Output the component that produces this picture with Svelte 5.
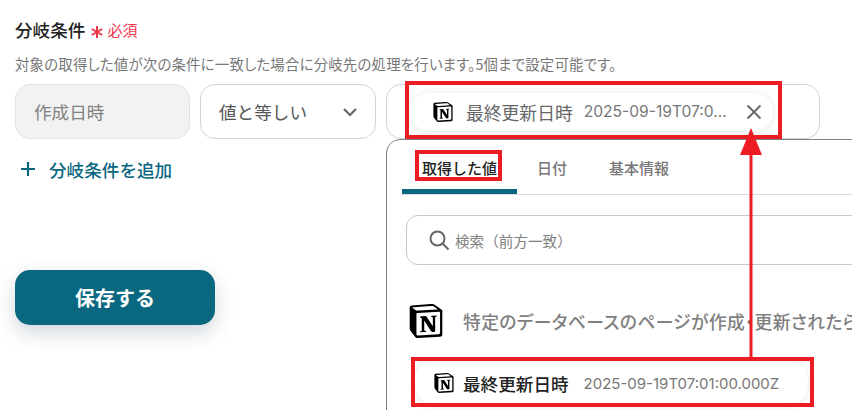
<script>
  const notion = 'M4.459 4.208c.746.606 1.026.56 2.428.466l13.215-.793c.28 0 .047-.28-.046-.326L17.86 1.968c-.42-.326-.981-.7-2.055-.607L3.01 2.295c-.466.046-.56.28-.374.466zm.793 3.08v13.904c0 .747.373 1.027 1.214.98l14.523-.84c.841-.046.935-.56.935-1.167V6.354c0-.606-.233-.933-.748-.887l-15.177.887c-.56.047-.747.327-.747.934zm14.337.745c.093.42 0 .84-.42.888l-.7.14v10.264c-.608.327-1.168.514-1.635.514-.748 0-.935-.234-1.495-.933l-4.577-7.186v6.952L12.21 19s0 .84-1.168.84l-3.222.186c-.093-.186 0-.653.327-.746l.84-.233V9.854L7.822 9.76c-.094-.42.14-1.026.793-1.073l3.456-.233 4.764 7.279v-6.44l-1.215-.139c-.093-.514.28-.887.747-.933zM1.936 1.035l13.31-.98c1.634-.14 2.055-.047 3.082.7l4.249 2.986c.7.513.934.653.934 1.213v16.378c0 1.026-.373 1.634-1.68 1.726l-15.458.934c-.98.047-1.448-.093-1.962-.747l-3.129-4.06c-.56-.747-.793-1.306-.793-1.96V2.667c0-.839.374-1.54 1.447-1.632z';
  const tabs = ['取得した値', '日付', '基本情報'];
</script>

<main class="page">
  <div class="label-row">
    <span class="label">分岐条件</span>
    <svg class="star" width="14" height="14" viewBox="0 0 14 14"><path d="M7 1v12M1.8 4l10.4 6M12.2 4L1.8 10" stroke="#f0364f" stroke-width="2" /></svg>
    <span class="required">必須</span>
  </div>
  <p class="desc">対象の取得した値が次の条件に一致した場合に分岐先の処理を行います。5個まで設定可能です。</p>

  <div class="fields">
    <div class="field readonly">作成日時</div>
    <div class="field select">
      <span>値と等しい</span>
      <svg width="16" height="10" viewBox="0 0 16 10"><path d="M2 2l6 6 6-6" fill="none" stroke="#666" stroke-width="2.2" /></svg>
    </div>
    <div class="field value">
      <div class="chip">
        <svg class="chip-logo" width="20" height="20" viewBox="0 0 24 24"><path d={notion} /></svg>
        <span class="chip-name">最終更新日時</span>
        <span class="chip-date">2025-09-19T07:0...</span>
        <svg class="close" width="16" height="16" viewBox="0 0 16 16"><path d="M1.5 1.5l13 13M14.5 1.5l-13 13" stroke="#666" stroke-width="1.8" /></svg>
      </div>
    </div>
  </div>

  <div class="add">
    <svg width="18" height="18" viewBox="0 0 18 18"><path d="M9 2v14M2 9h14" stroke="#0a6780" stroke-width="2.2" /></svg>
    <span>分岐条件を追加</span>
  </div>

  <button class="save">保存する</button>

  <div class="panel">
    <div class="tabs">
      {#each tabs as tab, i}
        <div class="tab" class:active={i === 0}>{tab}</div>
      {/each}
    </div>
    <div class="search">
      <svg width="22" height="22" viewBox="0 0 22 22"><circle cx="9.5" cy="9.5" r="7" fill="none" stroke="#666" stroke-width="2" /><path d="M14.5 14.5l6 6" stroke="#666" stroke-width="2" /></svg>
      <span>検索（前方一致）</span>
    </div>
    <div class="group">
      <svg width="34" height="34" viewBox="0 0 24 24"><path d={notion} /></svg>
      <span>特定のデータベースのページが作成・更新されたら</span>
    </div>
    <div class="result">
      <svg width="20" height="20" viewBox="0 0 24 24"><path d={notion} /></svg>
      <span class="result-name">最終更新日時</span>
      <span class="result-date">2025-09-19T07:01:00.000Z</span>
    </div>
  </div>

  <!-- annotations drawn over the screenshot -->
  <div class="mark mark-value"></div>
  <div class="mark mark-tab"></div>
  <div class="mark mark-result"></div>
  <svg class="arrow" width="24" height="232" viewBox="0 0 24 232">
    <path d="M12 20V232" stroke="#ed1c24" stroke-width="3" />
    <path d="M12 0L23 27H1z" fill="#ed1c24" />
  </svg>
</main>

<style>
  :global(body) {
    margin: 0;
    background: #fff;
  }

  .page {
    position: relative;
    width: 852px;
    height: 410px;
    overflow: hidden;
    box-sizing: border-box;
    padding: 16px 15px 0;
    font-family: 'Noto Sans CJK JP', 'Noto Sans', sans-serif;
    color: #333;
  }

  .label-row {
    display: flex;
    align-items: center;
    height: 26px;
  }

  .label {
    font-size: 17.6px;
    font-weight: 500;
    color: #222;
  }

  .star {
    margin: 5px 0 0 5px;
  }

  .required {
    margin-left: 3px;
    font-size: 15px;
    color: #f0364f;
  }

  .desc {
    margin: 11px 0 0;
    height: 21px;
    font-size: 14.4px;
    line-height: 21px;
    color: #777;
    white-space: nowrap;
    font-feature-settings: 'palt';
    letter-spacing: 0.22px;
  }

  .fields {
    display: flex;
    gap: 10px;
    margin-top: 10px;
  }

  .field {
    box-sizing: border-box;
    height: 55px;
    border: 1px solid #ced3dc;
    border-radius: 15px;
    display: flex;
    align-items: center;
    font-size: 17.6px;
  }

  .readonly {
    width: 175px;
    padding-left: 18px;
    background: #f2f2f2;
    border-color: #e2e3e6;
    color: #808080;
  }

  .select {
    width: 176px;
    padding: 0 17px 0 18px;
    justify-content: space-between;
    color: #555;
  }

  .value {
    width: 434px;
    padding-left: 23px;
  }

  .chip {
    width: 363px;
    height: 38px;
    box-sizing: border-box;
    padding: 0 11px 0 23px;
    display: flex;
    align-items: center;
    border-radius: 19px;
    background: #fff;
    box-shadow: 0 1px 8px rgba(0, 0, 0, 0.1);
  }

  .chip-name {
    margin-left: 13px;
    font-size: 17.8px;
    color: #666;
  }

  .chip-date {
    margin-left: 11px;
    font-family: Inter, sans-serif;
    font-size: 15.6px;
    color: #777;
    white-space: nowrap;
  }

  .close {
    margin-left: auto;
  }

  .add {
    display: flex;
    align-items: center;
    gap: 12px;
    margin: 17px 0 0 4px;
    height: 26px;
    font-size: 17.6px;
    font-weight: 500;
    color: #0a6780;
  }

  .save {
    display: block;
    width: 200px;
    height: 55px;
    margin-top: 88px;
    border: none;
    border-radius: 15px;
    background: #0a6780;
    color: #fff;
    font-family: inherit;
    font-size: 20px;
    font-weight: 700;
    box-shadow: 0 8px 20px rgba(30, 60, 80, 0.2);
  }

  .panel {
    position: absolute;
    left: 386px;
    top: 139px;
    width: 520px;
    height: 300px;
    box-sizing: border-box;
    background: #fff;
    border: 1px solid #808080;
    border-radius: 14px 0 0 0;
    padding: 0 0 0 19px;
  }

  .tabs {
    display: flex;
    height: 54px;
    margin-left: -4px;
    border-bottom: 1px solid #dcdcdc;
  }

  .tab {
    width: 115px;
    box-sizing: border-box;
    padding-top: 17px;
    text-align: center;
    font-size: 15px;
    font-weight: 500;
    color: #777;
  }

  .tab.active {
    color: #222;
    border-bottom: 5px solid #0a6780;
    border-radius: 4px 4px 0 0;
  }

  .tab:nth-child(2) {
    width: 70px;
  }

  .tab:nth-child(3) {
    width: 104px;
  }

  .search {
    display: flex;
    align-items: center;
    gap: 5px;
    height: 50px;
    box-sizing: border-box;
    margin-top: 20px;
    padding-left: 21px;
    border: 1px solid #c8c8c8;
    border-radius: 12px;
    font-size: 14.6px;
    color: #808080;
  }

  .group {
    display: flex;
    align-items: center;
    gap: 20px;
    margin: 39px 0 0 3px;
    height: 34px;
    font-size: 17.8px;
    font-weight: 500;
    color: #808080;
    white-space: nowrap;
    font-feature-settings: 'palt';
    letter-spacing: 0.4px;
  }

  .result {
    display: flex;
    align-items: center;
    width: 393px;
    height: 44px;
    box-sizing: border-box;
    margin: 23px 0 0 9px;
    padding-left: 19px;
    border-radius: 20px;
    box-shadow: 0 1px 8px rgba(0, 0, 0, 0.1);
  }

  .result-name {
    margin-left: 9px;
    font-size: 17.6px;
    font-weight: 500;
    color: #222;
  }

  .result-date {
    margin-left: 15px;
    font-family: Inter, sans-serif;
    font-size: 15px;
    color: #777;
  }

  .mark {
    position: absolute;
    box-sizing: border-box;
    border: 4px solid #ed1c24;
  }

  .mark-value {
    left: 405px;
    top: 81px;
    width: 377px;
    height: 58px;
  }

  .mark-tab {
    left: 415px;
    top: 150px;
    width: 87px;
    height: 31px;
  }

  .mark-result {
    left: 411px;
    top: 357px;
    width: 403px;
    height: 50px;
  }

  .arrow {
    position: absolute;
    left: 739px;
    top: 128px;
  }
</style>
